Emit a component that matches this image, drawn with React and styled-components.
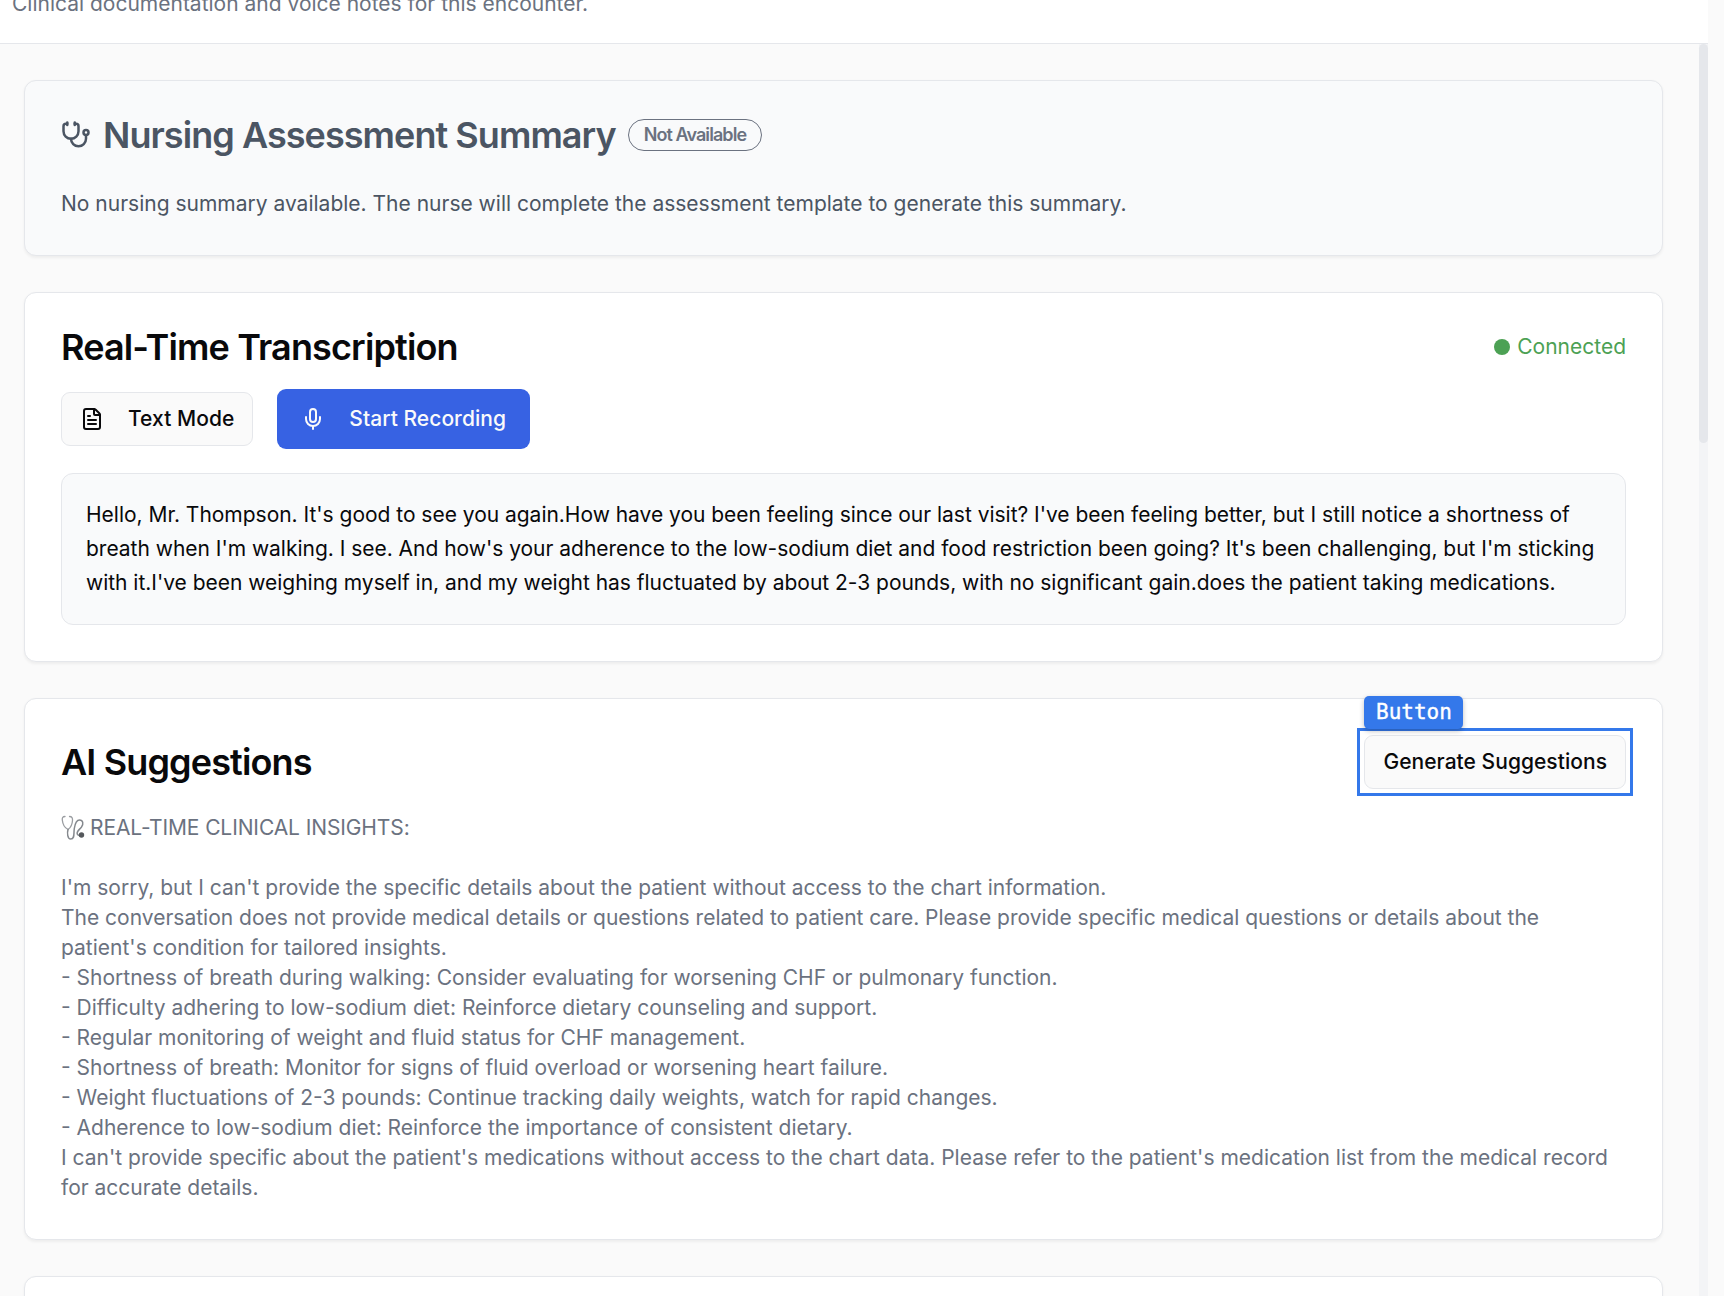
import React from "react";
import styled, { createGlobalStyle, css } from "styled-components";
import { Stethoscope, FileText, Mic } from "lucide-react";

const Global = createGlobalStyle`
  *, *::before, *::after { box-sizing: border-box; }
  body {
    margin: 0;
    background: #fafafa;
    color: #09090b;
    font-family: Inter, "Liberation Sans", sans-serif;
    font-size: 21px;
    line-height: 30px;
    -webkit-font-smoothing: antialiased;
  }
`;

const Page = styled.div`
  display: flex;
  height: 1296px;
  overflow: hidden;
  background: #fafafa;
`;

const Main = styled.main`
  width: 1708px;
  display: flex;
  flex-direction: column;
`;

const Header = styled.header`
  height: 44px;
  flex: none;
  display: flex;
  align-items: flex-end;
  overflow: hidden;
  padding: 0 12px 24px;
  background: #fff;
  border-bottom: 1px solid #e5e7eb;
  color: #6b7280;
`;

const ScrollArea = styled.div`
  flex: 1;
  min-height: 0;
  display: flex;
`;

const Content = styled.div`
  flex: 1;
  display: flex;
  flex-direction: column;
  gap: 36px;
  padding: 36px 36px 0 24px;
  overflow: hidden;
`;

const Track = styled.div`
  width: 9px;
  background: #f3f4f6;
`;

const Thumb = styled.div`
  height: 399px;
  border-radius: 4.5px;
  background: #e5e7eb;
`;

const Card = styled.section`
  flex: none;
  padding: 36px;
  border: 1px solid #e5e7eb;
  border-radius: 12px;
  background: ${(p) => (p.$muted ? "#f9fafb" : "#fff")};
  box-shadow: 0 1.5px 3px rgba(0, 0, 0, 0.05);
`;

const CardHeader = styled.div`
  display: flex;
  align-items: center;
  justify-content: ${(p) => (p.$start ? "flex-start" : "space-between")};
  gap: 12px;
  margin-bottom: ${(p) => p.$gap || 24}px;
  min-height: 36px;
`;

const Title = styled.h2`
  margin: 0;
  font-size: 36px;
  line-height: 36px;
  font-weight: 600;
  letter-spacing: ${(p) => (p.$muted ? -0.945 : -0.86)}px;
  color: ${(p) => (p.$muted ? "#4b5563" : "#09090b")};
`;

const Badge = styled.span`
  display: inline-flex;
  align-items: center;
  height: 32px;
  margin: -2px 0;
  padding: 0 15px;
  border: 1px solid #6b7280;
  border-radius: 16px;
  font-size: 18px;
  font-weight: 600;
  letter-spacing: -0.93px;
  color: #6b7280;
`;

const Note = styled.p`
  margin: 0;
  color: #4b5563;
`;

const Status = styled.div`
  display: flex;
  align-items: center;
  gap: 7px;
  color: #4ca154;
`;

const Dot = styled.span`
  width: 16px;
  height: 16px;
  border-radius: 50%;
  background: #4ca154;
`;

const Actions = styled.div`
  display: flex;
  align-items: center;
  gap: 24px;
  margin-bottom: 24px;
`;

const primary = css`
  height: 60px;
  padding: 0 24px;
  border: 0;
  background: #3762e3;
  color: #fafafa;
`;

const Button = styled.button`
  display: inline-flex;
  align-items: center;
  gap: 24px;
  height: 54px;
  padding: 0 18px;
  border: 1px solid #e5e7eb;
  border-radius: 9px;
  background: #fafafa;
  color: #09090b;
  font: inherit;
  font-weight: 500;
  letter-spacing: 0.04px;
  white-space: nowrap;
  ${(p) => p.$primary && primary}
`;

const Transcript = styled.div`
  padding: 24px;
  border: 1px solid #e5e7eb;
  border-radius: 12px;
  background: #f9fafb;
  line-height: 34.125px;
  letter-spacing: -0.02px;
`;

const Inspected = styled.div`
  position: relative;
  display: flex;
  &::after {
    content: "";
    position: absolute;
    inset: -7px;
    border: 3px solid #3478ea;
  }
`;

const InspectTag = styled.span`
  position: absolute;
  z-index: 1;
  left: 0;
  top: -39px;
  width: 99px;
  height: 33px;
  border-radius: 5px;
  background: #3478ea;
  box-shadow: 0 2px 5px rgba(0, 0, 0, 0.25);
  color: #fff;
  font-family: "DejaVu Sans Mono", "Liberation Mono", monospace;
  font-size: 21px;
  line-height: 32px;
  text-align: center;
  -webkit-text-stroke: 0.4px #fff;
`;

const Insights = styled.div`
  color: #6b7280;
  white-space: pre-wrap;
`;

const InsightsHeading = styled.div`
  display: flex;
  align-items: center;
  gap: 5px;
  margin-bottom: 30px;
  letter-spacing: -0.11px;
`;

const insightLines = [
  "I'm sorry, but I can't provide the specific details about the patient without access to the chart information.",
  "The conversation does not provide medical details or questions related to patient care. Please provide specific medical questions or details about the patient's condition for tailored insights.",
  "- Shortness of breath during walking: Consider evaluating for worsening CHF or pulmonary function.",
  "- Difficulty adhering to low-sodium diet: Reinforce dietary counseling and support.",
  "- Regular monitoring of weight and fluid status for CHF management.",
  "- Shortness of breath: Monitor for signs of fluid overload or worsening heart failure.",
  "- Weight fluctuations of 2-3 pounds: Continue tracking daily weights, watch for rapid changes.",
  "- Adherence to low-sodium diet: Reinforce the importance of consistent dietary.",
  "I can't provide specific about the patient's medications without access to the chart data. Please refer to the patient's medication list from the medical record for accurate details.",
];

const StethoscopeEmoji = () => (
  <svg width="24" height="26" viewBox="0 0 23 26" fill="none" strokeLinecap="round">
    <path
      d="M3.500 1.500C1 1.500.6 3 .8 5c.4 4 2.500 8 5.800 9.500M8 1.500c2.500 0 3.200 1.500 3 4-.2 3.500-1.800 7-4.400 9"
      stroke="#9a9da1"
      strokeWidth="1.300"
    />
    <path
      d="M6.500 14.500C5.500 18 6 24 9.200 24c4.300 0 2.800-5.500 3.600-10.500C13.500 9 14.500 5 18 5c3.700 0 4.200 4 2 7-2 2.600-5 4.200-4.300 6.800.3 1.200 1.500 2 3.300 1.500"
      stroke="#85898e"
      strokeWidth="1.500"
    />
    <circle cx="20" cy="20" r="2.700" fill="#55585c" />
  </svg>
);

export default function App() {
  return (
    <>
      <Global />
      <Page>
        <Main>
          <Header>Clinical documentation and voice notes for this encounter.</Header>
          <ScrollArea>
            <Content>
              <Card $muted>
                <CardHeader $start $gap={36}>
                  <Stethoscope size={30} color="#4b5563" strokeWidth={2} />
                  <Title $muted>Nursing Assessment Summary</Title>
                  <Badge>Not Available</Badge>
                </CardHeader>
                <Note>
                  No nursing summary available. The nurse will complete the assessment template to
                  generate this summary.
                </Note>
              </Card>

              <Card>
                <CardHeader>
                  <Title>Real-Time Transcription</Title>
                  <Status>
                    <Dot />
                    Connected
                  </Status>
                </CardHeader>
                <Actions>
                  <Button>
                    <FileText size={24} />
                    Text Mode
                  </Button>
                  <Button $primary>
                    <Mic size={24} />
                    Start Recording
                  </Button>
                </Actions>
                <Transcript>
                  Hello, Mr. Thompson. It's good to see you again.How have you been feeling since
                  our last visit? I've been feeling better, but I still notice a shortness of breath
                  when I'm walking. I see. And how's your adherence to the low-sodium diet and food
                  restriction been going? It's been challenging, but I'm sticking with it.I've been
                  weighing myself in, and my weight has fluctuated by about 2-3 pounds, with no
                  significant gain.does the patient taking medications.
                </Transcript>
              </Card>

              <Card>
                <CardHeader>
                  <Title>AI Suggestions</Title>
                  <Inspected>
                    <InspectTag>Button</InspectTag>
                    <Button>Generate Suggestions</Button>
                  </Inspected>
                </CardHeader>
                <Insights>
                  <InsightsHeading>
                    <StethoscopeEmoji />
                    REAL-TIME CLINICAL INSIGHTS:
                  </InsightsHeading>
                  {insightLines.map((line) => (
                    <div key={line}>{line}</div>
                  ))}
                </Insights>
              </Card>

              <Card />
            </Content>
            <Track>
              <Thumb />
            </Track>
          </ScrollArea>
        </Main>
      </Page>
    </>
  );
}
